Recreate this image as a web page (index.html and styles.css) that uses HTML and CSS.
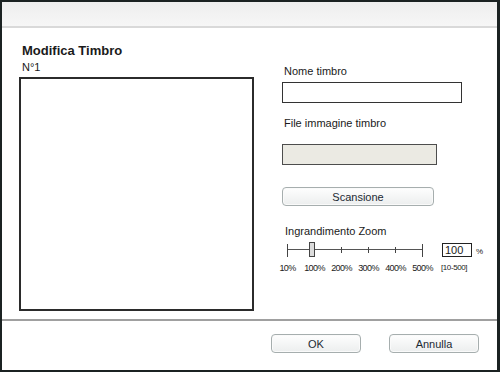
FILE: index.html
```html
<!DOCTYPE html>
<html>
<head>
<title>Modifica Timbro</title>
<meta charset="UTF-8">
<meta name="viewport" content="width=device-width, initial-scale=1.0">
<link rel="stylesheet" href="styles.css">
</head>

<body>

<div class="window">
  <div class="titlebar"></div>

  <div class="content">
    <div class="leftcol">
      <h1 class="title">Modifica Timbro</h1>
      <p class="stampno">N°1</p>
      <div class="preview"></div>
    </div>

    <div class="rightcol">
      <p class="label">Nome timbro</p>
      <input type="text" class="textbox" value="">

      <p class="label gap">File immagine timbro</p>
      <div class="filebox"></div>

      <button class="btn scanbtn">Scansione</button>

      <p class="label zoomlabel">Ingrandimento Zoom</p>
      <div class="zoomrow">
        <div class="track">
          <span class="tick big"></span>
          <span class="tick"></span>
          <span class="tick"></span>
          <span class="tick"></span>
          <span class="tick"></span>
          <span class="tick big"></span>
          <span class="thumb"></span>
        </div>
        <div class="zoombox">100</div>
        <span class="pct">%</span>
      </div>
      <div class="scalerow">
        <div class="scale">
          <span>10%</span><span>100%</span><span>200%</span><span>300%</span><span>400%</span><span>500%</span>
        </div>
        <span class="range">[10-500]</span>
      </div>
    </div>
  </div>

  <div class="separator"></div>

  <div class="footer">
    <button class="btn okbtn">OK</button>
    <button class="btn okbtn">Annulla</button>
  </div>
</div>

</body>
</html>
```

FILE: styles.css
```css
body {
  margin: 0;
  font-family: "Liberation Sans", Arial, sans-serif;
  color: #1a1a1a;
  background: #fff;
}

/* dialog frame */
.window {
  box-sizing: border-box;
  width: 500px;
  height: 372px;
  border-style: solid;
  border-color: #1b2222;
  border-width: 2px 3px 2px 2px;
  background: #fff;
  display: flex;
  flex-direction: column;
}

.titlebar {
  height: 24px;
  background: linear-gradient(#eeeeee, #f6f6f6);
  border-bottom: 2px solid #d9d9d9;
}

.content {
  display: flex;
  padding-left: 17px;
}

/* left side: title + stamp preview */
.leftcol {
  padding-top: 15px;
}

.title {
  margin: 0;
  padding-left: 3px;
  font-size: 13px;
  line-height: 15px;
  font-weight: bold;
}

.stampno {
  margin: 3px 0 0;
  padding-left: 3px;
  font-size: 11px;
  line-height: 13px;
}

.preview {
  box-sizing: border-box;
  margin-top: 3px;
  width: 235px;
  height: 234px;
  border: 2px solid #2b2b2b;
}

/* right side: form */
.rightcol {
  margin-left: 28px;
  padding-top: 37px;
  display: flex;
  flex-direction: column;
  align-items: flex-start;
}

.label {
  margin: 0;
  padding-left: 2px;
  font-size: 11px;
  line-height: 13px;
}

.label.gap { margin-top: 14px; }

.textbox {
  box-sizing: border-box;
  margin-top: 4px;
  width: 180px;
  height: 21px;
  border: 1px solid #333;
  padding: 0 3px;
  outline: none;
}

.filebox {
  box-sizing: border-box;
  margin-top: 14px;
  width: 155px;
  height: 21px;
  border: 1px solid #4d4d4d;
  background: #ebeae3;
}

.btn {
  box-sizing: border-box;
  height: 19px;
  padding: 0;
  border: 1px solid #a6aeae;
  border-radius: 4px;
  background: linear-gradient(#fefefe, #eceeee);
  box-shadow: inset 0 0 0 1px #fafafa;
  font-family: "Liberation Sans", Arial, sans-serif;
  font-size: 11px;
  color: #1c2a33;
}

.scanbtn {
  margin-top: 22px;
  width: 152px;
}

.zoomlabel {
  margin-top: 19px;
  padding-left: 3px;
}

/* zoom slider */
.zoomrow {
  margin-top: 4px;
  display: flex;
  align-items: center;
}

.track {
  position: relative;
  margin-left: 5px;
  width: 136px;
  height: 16px;
  display: flex;
  justify-content: space-between;
  align-items: center;
  background: linear-gradient(#555, #555) no-repeat 0 7px / 100% 1px;
}

.tick {
  width: 1px;
  height: 6px;
  background: #444;
}

.tick.big { height: 13px; }

.thumb {
  position: absolute;
  left: 22px;
  top: 0;
  box-sizing: border-box;
  width: 6px;
  height: 15px;
  border: 1px solid #444;
  background: #dcdcdc;
}

.zoombox {
  box-sizing: border-box;
  margin-left: 19px;
  width: 30px;
  height: 14px;
  border: 1px solid #222;
  padding-left: 2px;
  font-size: 11px;
  line-height: 12px;
}

.pct {
  margin-left: 4px;
  margin-top: 3px;
  font-size: 8px;
}

.scalerow {
  margin-top: 5px;
  display: flex;
}

.scale {
  display: flex;
  margin-left: -8px;
}

.scale span {
  width: 27px;
  text-align: center;
  font-size: 9px;
  letter-spacing: -0.6px;
  line-height: 10px;
}

.range {
  margin-left: 5px;
  font-size: 8px;
  letter-spacing: -0.4px;
  line-height: 10px;
}

.separator {
  margin-top: 8px;
  height: 2px;
  background: #a0a0a0;
}

.footer {
  display: flex;
  justify-content: flex-end;
  gap: 28px;
  padding: 13px 18px 0 0;
}

.okbtn { width: 90px; }
```
